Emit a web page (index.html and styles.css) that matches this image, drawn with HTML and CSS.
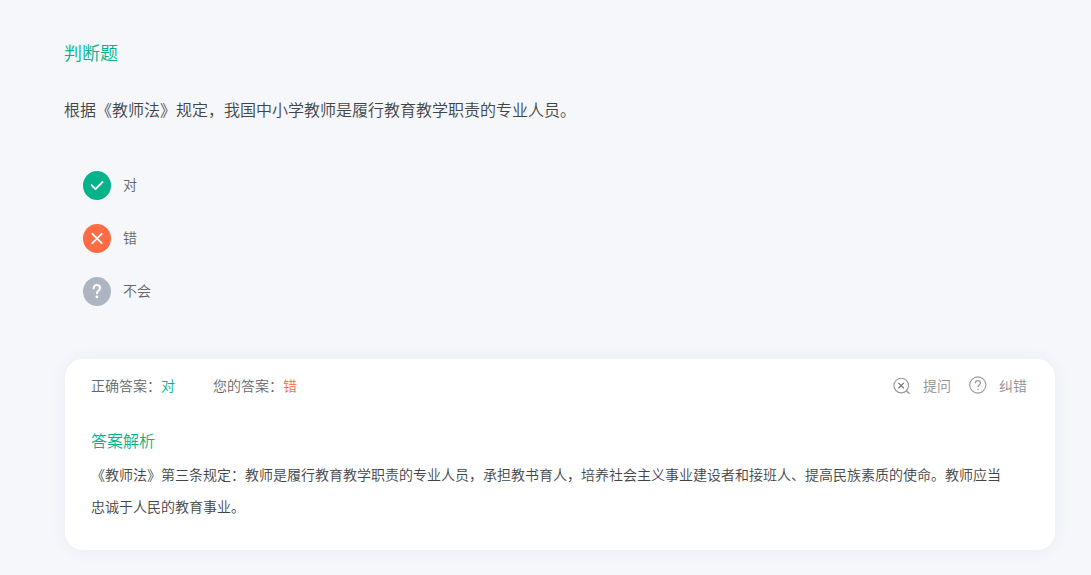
FILE: index.html
```html
<!DOCTYPE html>
<html lang="zh-CN">
<head>
<meta charset="utf-8">
<meta name="viewport" content="width=device-width, initial-scale=1">
<title>判断题</title>
<link rel="stylesheet" href="styles.css">
</head>
<body>
<main class="question">
  <h1 class="question-type">判断题</h1>
  <p class="question-text">根据《教师法》规定，我国中小学教师是履行教育教学职责的专业人员。</p>

  <div class="options">
    <button class="option" type="button">
      <svg class="option-icon" viewBox="0 0 28 29" aria-hidden="true">
        <ellipse cx="14" cy="14.5" rx="14" ry="14.5" fill="#04b38a"/>
        <path d="M8.6 14.2l3.9 4 7-7.2" fill="none" stroke="#fff" stroke-width="1.8" stroke-linecap="round" stroke-linejoin="round"/>
      </svg>
      <span>对</span>
    </button>
    <button class="option" type="button">
      <svg class="option-icon" viewBox="0 0 28 29" aria-hidden="true">
        <ellipse cx="14" cy="14.5" rx="14" ry="14.5" fill="#ff6b45"/>
        <path d="M9.3 9.8l9.4 9.4M18.7 9.8l-9.4 9.4" fill="none" stroke="#fff" stroke-width="1.8" stroke-linecap="round"/>
      </svg>
      <span>错</span>
    </button>
    <button class="option" type="button">
      <svg class="option-icon" viewBox="0 0 28 29" aria-hidden="true">
        <ellipse cx="14" cy="14.5" rx="14" ry="14.5" fill="#adb5c3"/>
        <path d="M10.6 11.4c0-2.2 1.3-3.4 3.2-3.4s3.2 1.2 3.2 3.1c0 2.5-3.1 2.6-3.1 5.2" fill="none" stroke="#fff" stroke-width="2" stroke-linecap="round"/>
        <circle cx="13.9" cy="19.8" r="1.4" fill="#fff"/>
      </svg>
      <span>不会</span>
    </button>
  </div>

  <section class="answer-card">
    <div class="answer-bar">
      <p class="answer">正确答案：<span class="is-correct">对</span></p>
      <p class="answer">您的答案：<span class="is-wrong">错</span></p>
      <div class="actions">
        <button class="action" type="button">
          <svg class="action-icon" viewBox="0 0 18 18" aria-hidden="true">
            <circle cx="8.2" cy="9.6" r="7.3" fill="none" stroke="#999" stroke-width="1.1"/>
            <path d="M13.2 14.8l3.4 3" fill="none" stroke="#999" stroke-width="1.3"/>
            <path d="M5.4 6.9l5.4 5.4M10.8 6.9L5.4 12.3" fill="none" stroke="#777" stroke-width="1.3"/>
          </svg>
          <span>提问</span>
        </button>
        <button class="action" type="button">
          <svg class="action-icon" viewBox="0 0 18 18" aria-hidden="true">
            <circle cx="8.8" cy="9" r="8.1" fill="none" stroke="#999" stroke-width="1.1"/>
            <path d="M6.3 7.3c0-1.7 1.1-2.6 2.6-2.6s2.5.9 2.5 2.3c0 1.9-2.4 2-2.4 4.2" fill="none" stroke="#999" stroke-width="1.2"/>
            <circle cx="9" cy="13.2" r=".8" fill="#999"/>
          </svg>
          <span>纠错</span>
        </button>
      </div>
    </div>
    <h2 class="analysis-title">答案解析</h2>
    <p class="analysis-text">《教师法》第三条规定：教师是履行教育教学职责的专业人员，承担教书育人，培养社会主义事业建设者和接班人、提高民族素质的使命。教师应当忠诚于人民的教育事业。</p>
  </section>
</main>
</body>
</html>
```
FILE: styles.css
```css
* {
  box-sizing: border-box;
}

body {
  margin: 0;
  background: #f5f7fb;
  color: #444;
  font-family: "Noto Sans CJK SC", sans-serif;
  font-weight: 350;
}

h1,
h2,
p {
  margin: 0;
  font-weight: inherit;
}

button {
  padding: 0;
  border: 0;
  background: none;
  font: inherit;
  cursor: pointer;
}

.question {
  padding: 36px 36px 25px 64px;
}

.question-type {
  color: #04b38a;
  font-size: 18px;
  line-height: 32px;
}

.question-text {
  margin-top: 25px;
  font-size: 16px;
  line-height: 32px;
}

.options {
  display: flex;
  flex-direction: column;
  align-items: flex-start;
  gap: 24px;
  padding: 46px 19px 53px;
}

.option {
  display: flex;
  align-items: center;
  gap: 12px;
  color: #666;
  font-size: 14px;
  line-height: 24px;
}

.option span {
  padding-bottom: 3px;
}

.option-icon {
  width: 28px;
  height: 29px;
}

.answer-card {
  margin-left: 1px;
  padding: 10px 28px 28px 26px;
  border-radius: 18px;
  background: #fff;
  box-shadow: 0 0 18px rgba(40, 60, 100, 0.06);
}

.answer-bar {
  display: flex;
  align-items: center;
  gap: 38px;
  font-size: 14px;
  line-height: 32px;
}

.answer {
  color: #666;
}

.is-correct {
  color: #04b38a;
}

.is-wrong {
  color: #ff6b45;
}

.actions {
  display: flex;
  gap: 18px;
  margin-left: auto;
}

.action {
  display: flex;
  align-items: center;
  gap: 12px;
  color: #909090;
}

.action-icon {
  width: 18px;
  height: 18px;
}

.analysis-title {
  margin-top: 23px;
  color: #04b38a;
  font-size: 16px;
  line-height: 32px;
}

.analysis-text {
  margin-top: 2px;
  padding-right: 16px;
  font-size: 14px;
  line-height: 32px;
}
```
